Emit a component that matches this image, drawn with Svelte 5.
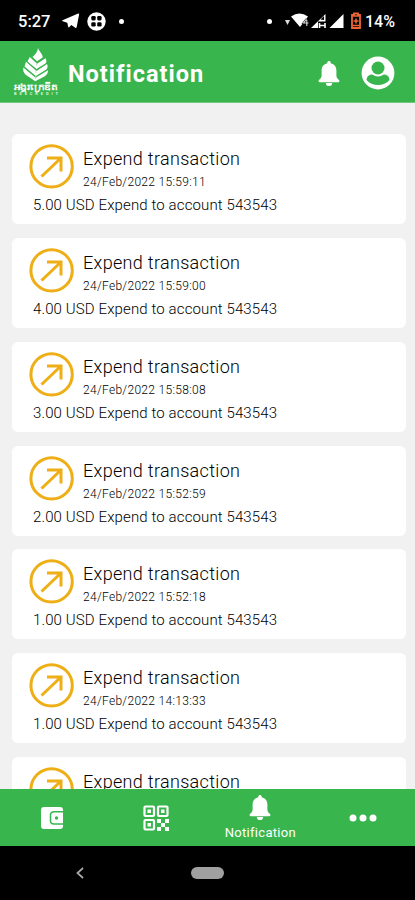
<script>
  const items = [
    ['24/Feb/2022 15:59:11', '5.00'],
    ['24/Feb/2022 15:59:00', '4.00'],
    ['24/Feb/2022 15:58:08', '3.00'],
    ['24/Feb/2022 15:52:59', '2.00'],
    ['24/Feb/2022 15:52:18', '1.00'],
    ['24/Feb/2022 14:13:33', '1.00']
  ];
</script>

{#snippet bell(w, h)}
  <svg width={w} height={h} viewBox="0 0 22 25" fill="#fff" preserveAspectRatio="none">
    <path d="M11 0c1 0 1.700.700 1.700 1.700v.5c3.700.8 5.700 3.600 5.700 7.300v5.200c0 1.700 1.100 2.700 2.600 4.300.9 1 .4 2.200-.9 2.200H1.900c-1.300 0-1.800-1.200-.9-2.200 1.500-1.600 2.600-2.600 2.600-4.300V9.500c0-3.700 2-6.500 5.700-7.300v-.5C9.300.7 10 0 11 0zM7.800 21.900h6.400c0 1.900-1.300 3.100-3.200 3.100s-3.200-1.200-3.200-3.100z" />
  </svg>
{/snippet}

{#snippet arrow()}
  <svg width="46" height="46" viewBox="0 0 46 46" fill="none" stroke="#eeae16" stroke-width="3">
    <circle cx="22.600" cy="22.400" r="20.700" />
    <path d="M12.500 32.500 32 14M18 14H32V27.500" />
  </svg>
{/snippet}

<div class="phone">
  <div class="status">
    <span class="time">5:27</span>
    <svg class="tg" width="18" height="16" viewBox="0 0 18 16" fill="#fff"><path d="M.5 7.200 16.200.5c.7-.2 1 .2.9.9l-2.400 12.700c-.2.900-.7 1.100-1.400.7l-4-2.900-2.100 2.300c-.5.400-.9.200-1-.5L5.300 9.700.7 8.300C0 8 0 7.500.5 7.200zM6.500 9.500 13.500 4 7.700 10l-.2 2.200z" /></svg>
    <svg class="globe" width="19" height="19" viewBox="0 0 19 19">
      <circle cx="9.500" cy="9.500" r="9.200" fill="#fff" />
      <g fill="#000"><rect x="4.300" y="4" width="4.400" height="4.400" rx="1.300" /><rect x="10.200" y="4" width="4.400" height="4.400" rx="1.300" /><rect x="4.300" y="10.200" width="4.400" height="4.400" rx="1.300" /><rect x="10.200" y="10.200" width="4.400" height="4.400" rx="1.300" /></g>
    </svg>
    <i class="dot"></i>
    <i class="dot right"></i>
    <svg class="signals" width="77" height="20" viewBox="0 0 77 20">
      <path d="M0 9h5l-2.500 5z" fill="#ddd" />
      <path d="M6 5.500Q14.500-.5 23 5.500L15 16z" fill="#fff" />
      <path d="M21.500 8 18.500 12h5M21.800 9V15" stroke="#000" stroke-width="2" fill="none" />
      <path d="M21.500 8 18.500 12h5M21.800 9V15" stroke="#ddd" stroke-width="1.100" fill="none" />
      <path d="M40.500 3V17H26z" fill="#fff" />
      <path d="M33 10.500h8v7h-8z" fill="#000" /><path d="M35.500 8.500 39 5v4z" fill="#000" />
      <path d="M34.500 12v5m5.500-5v5m-5-2.500h5" stroke="#fff" stroke-width="1.600" fill="none" />
      <path d="M58.500 3v14H44.500z" fill="#fff" />
      <path d="M69 2.500h4v1.500h2v13h-8V4h2z" fill="#000" stroke="#ee6537" stroke-width="1.800" />
      <path d="M68 5h6M67.500 14.500h7M71 7.500v5M68.500 10h5" stroke="#ee6537" stroke-width="1.500" />
    </svg>
    <span class="pct">14%</span>
  </div>

  <header>
    <svg class="logo" width="46" height="48" viewBox="0 0 46 48">
      <g fill="#fff">
        <path d="M25 0c1 3.500 5 6 4.700 9.500L24 13.300 19.500 9C22.500 6.500 24.500 4 25 0z" />
        <path d="M16.800 9 24 15.800l8.500-5.500c1 1.800 1.200 3.500.3 5L23.500 21 14.500 13.500z" />
        <path d="M13 13.800 23.500 23 34 16c1 2.200.8 4-.7 5.500L22.800 28 11.500 18.500z" />
        <path d="M10.300 19.500 22.500 29.800 35 22.300c0 2.800-1 4.500-3.200 6L22.300 33.300 13 27c-2.300-2-3.200-4.500-2.700-7.500z" />
      </g>
      <path d="M23.500 17.500v-3M23 24.800v-3M22.600 31v-3" stroke="#a9dfb2" stroke-width=".8" />
      <text x="1" y="42" textLength="43" lengthAdjust="spacingAndGlyphs" font-size="8.500" font-weight="700" fill="#fff">អង្គរក្រេឌីត</text>
      <text x="1" y="47.300" textLength="44" font-size="4" font-weight="700" fill="#dff5df">BEECREDIT</text>
    </svg>
    <h1>Notification</h1>
    <div class="hbell">{@render bell(22, 25)}</div>
    <svg class="user" width="34" height="34" viewBox="0 0 34 34">
      <circle cx="17" cy="17" r="16.400" fill="#fff" />
      <circle cx="17" cy="12" r="6.500" fill="#38b54d" />
      <path d="M10 18.500q2 0 3.500 1.300 3.500 1.500 7 0 1.500-1.300 3.500-1.300c2.700.5 4.300 2.500 4.500 5.500-5.500 6.700-17.500 6.700-23 0 .2-3 1.800-5 4.500-5.500z" fill="#38b54d" />
    </svg>
  </header>

  <main>
    {#each items as [date, amount]}
      <article>
        <div class="top">
          {@render arrow()}
          <div class="head">
            <h2>Expend transaction</h2>
            <time>{date}</time>
          </div>
        </div>
        <p>{amount} USD Expend to account 543543</p>
      </article>
    {/each}
    <article class="partial">
      <div class="top">
        {@render arrow()}
        <div class="head"><h2>Expend transaction</h2></div>
      </div>
    </article>
  </main>

  <nav>
    <div class="tab">
      <svg width="24" height="24" viewBox="0 0 24 24">
        <path d="M4 1h16q3 0 3 3v16q0 3-3 3H4q-3 0-3-3V4q0-3 3-3z" fill="#fff" />
        <path d="M24 5.800h-9.500Q10.500 5.800 10.500 9v6q0 3 3.500 3H24" fill="none" stroke="#38b54d" stroke-width="1.500" />
        <circle cx="16.500" cy="12" r="1.700" fill="#38b54d" />
      </svg>
    </div>
    <div class="tab">
      <svg width="26" height="26" viewBox="0 0 26 26" fill="none" stroke="#fff" stroke-width="2.200">
        <rect x="1.500" y="1.500" width="9.500" height="9.500" rx="1" /><rect x="15" y="1.500" width="9.500" height="9.500" rx="1" /><rect x="1.500" y="15" width="9.500" height="9.500" rx="1" />
        <path fill="#fff" stroke="none" d="M4.500 4.500H8V8H4.500zM18 4.500h3.500V8H18zM4.500 18H8v3.500H4.500zM14 14h4v4h-4zM18 18h4v4h-4zM22 14h4v4h-4zM14 22h4v4h-4zM22 22h4v4h-4z" />
      </svg>
    </div>
    <div class="tab active">
      {@render bell(22, 25)}
      <span>Notification</span>
    </div>
    <div class="tab">
      <svg width="28" height="8" viewBox="0 0 28 8" fill="#fff"><circle cx="4" cy="4" r="3.500" /><circle cx="14" cy="4" r="3.500" /><circle cx="24" cy="4" r="3.500" /></svg>
    </div>
  </nav>

  <footer>
    <svg width="8" height="12" viewBox="0 0 8 12" fill="none" stroke="#aaa" stroke-width="1.700"><path d="M7 1 1.500 6 7 11" /></svg>
    <i></i>
  </footer>
</div>

<style>
  :global(body) { margin: 0; background: #000; }
  .phone { width: 415px; height: 900px; display: flex; flex-direction: column; overflow: hidden; background: #f1f1f1; font-family: Roboto, "Noto Sans", sans-serif; }
  svg { display: block; flex: none; }
  .status { height: 41px; flex: none; display: flex; align-items: center; background: #000; color: #fff; box-sizing: border-box; padding: 1px 19px 0 18px; }
  .time { width: 32px; font-size: 16.500px; font-weight: 500; white-space: nowrap; }
  .tg { margin-left: 12px; }
  .globe { margin-left: 7px; }
  .dot { width: 5px; height: 5px; border-radius: 50%; background: #fff; margin-left: 13px; }
  .dot.right { margin-left: auto; }
  .signals { margin-left: 13px; }
  .pct { margin: 1px 0 0 3px; width: 31px; font-size: 16px; font-weight: 500; white-space: nowrap; }
  header { height: 62px; flex: none; display: flex; align-items: center; background: #38b54d; box-sizing: border-box; padding: 0 20px 0 13px; border-bottom: 1px solid #6fc87e; }
  h1 { margin: 4px 0 0 9px; color: #fff; font-size: 23.500px; line-height: 30px; font-weight: 700; letter-spacing: 1px; }
  .hbell { margin: 4px 21px 0 auto; }
  .user { margin-top: 2px; }
  main { flex: 1; min-height: 0; overflow: hidden; padding: 31px 9px 0 12px; display: flex; flex-direction: column; gap: 13.850px; }
  article { height: 90px; flex: none; box-sizing: border-box; border-radius: 6px; background: #fff; padding: 10px 17px 0; }
  .partial { height: 32px; overflow: hidden; border-radius: 6px 6px 0 0; }
  .top { display: flex; gap: 8px; height: 46px; }
  .head { padding-top: 4px; }
  h2 { margin: 0; font-size: 18px; line-height: 22px; font-weight: 300; color: #000; letter-spacing: .32px; white-space: nowrap; }
  time { display: block; margin-top: 4px; font-size: 12px; line-height: 16px; font-weight: 300; color: #000; letter-spacing: .3px; }
  p { margin: 5px 0 0 4px; font-size: 15px; line-height: 20px; font-weight: 300; color: #000; letter-spacing: .12px; white-space: nowrap; }
  nav { height: 57px; flex: none; display: grid; grid-template-columns: repeat(4, 1fr); background: #38b54d; }
  .tab { display: flex; flex-direction: column; align-items: center; justify-content: center; color: #fff; }
  .active { justify-content: flex-start; padding: 6px 0 0 2px; }
  .active span { margin-top: 5px; font-size: 13px; line-height: 16px; letter-spacing: .3px; }
  footer { height: 54px; flex: none; display: flex; align-items: center; background: #000; padding-left: 76px; }
  footer i { width: 33px; height: 12px; border-radius: 6px; background: #a0a0a0; margin-left: 107px; }
</style>
